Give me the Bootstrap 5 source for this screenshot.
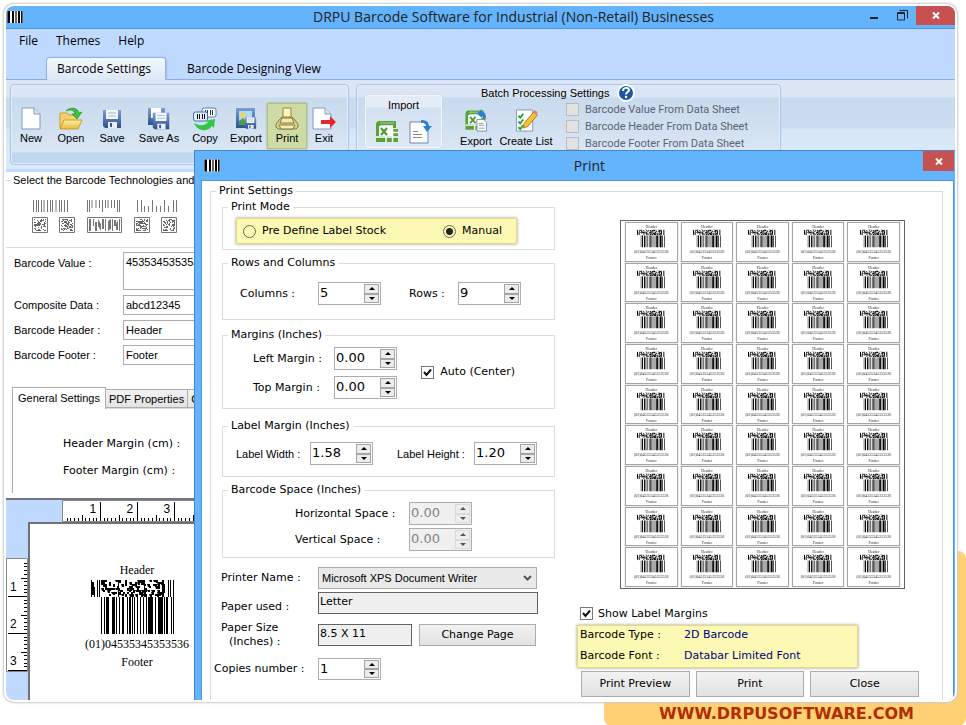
<!DOCTYPE html>
<html lang="en">
<head>
<meta charset="utf-8">
<meta name="viewport" content="width=device-width, initial-scale=1">
<title>DRPU Barcode Software for Industrial (Non-Retail) Businesses</title>
<link href="https://cdn.jsdelivr.net/npm/bootstrap@5.3.0/dist/css/bootstrap.min.css" rel="stylesheet">
<style>
:root{--sky:#64b3fd;--pale:#c0daff;--edge:#4f96da;--ui:"Open Sans","Noto Sans",sans-serif;--sans:"Liberation Sans",Arial,sans-serif;--wide:"DejaVu Sans",Verdana,sans-serif;--serif:"Liberation Serif","Times New Roman",serif}
body{font-family:var(--sans);font-size:11px;line-height:14px;color:#000;background:#fff}
button,input,select,textarea{font:inherit;color:inherit;border-radius:0;margin:0}
label{margin:0}
.shell{position:relative;padding:6px 11px 0 6px;isolation:isolate}
.plate{position:absolute;right:0;bottom:0;width:362px;height:175px;background:#ffd174;border-radius:8px;z-index:-1}
.window-stack{display:grid;grid-template-columns:minmax(0,1fr);border-radius:8px;overflow:hidden;background:#fff}
.ring{border-radius:8px;box-shadow:0 0 0 2px #fff,0 0 2px 3px #c9c9c9}
.window-stack>*{grid-area:1/1}
.base{display:flex;flex-direction:column;min-width:0}
.titlebar{background:var(--sky);color:#222;font:14px/22px var(--ui)}
.base>.titlebar{height:23px;border-bottom:1px solid var(--edge)}
.base>.titlebar .caption{padding-left:144px}
.closer{border:0;background:#c75050;color:#fff;padding:0;display:flex;align-items:center;justify-content:center}
.base .closer{width:39px;height:19px}
.dialog .closer{width:31px;height:20px;margin-right:1px}
.wbtn{border:0;background:none;padding:0;width:28px;height:19px;display:flex;align-items:center;justify-content:center}
.menus{background:var(--pale);font:12px/24px var(--ui);height:28px;padding-left:13px;gap:18px}
.menus a{color:#000;text-decoration:none}
.tabrow{background:var(--pale);height:23px;padding-left:40px;border-bottom:1px solid #84aede;font:12px/22px var(--ui)}
.tabrow button{border:0;background:none;padding:0 10px;height:23px;margin-left:11px}
.tabrow button.on{background:linear-gradient(#f3f8fe,#dce7f5);border:1px solid #8fb5e6;border-bottom:0;border-radius:4px 4px 0 0;box-shadow:1px 0 2px #a2b9ef;margin-left:0;padding:0 4px 0 0;width:120px}
.ribbon{background:linear-gradient(#dbe5f3 17px,#c8daed 18px,#cbdcee 48px,#d5e6f5 49px,#dcebfb);height:92px;padding:4px 4px 4px 4px;gap:7px;border-bottom:3px solid var(--pale)}
.rgroup{border:1px solid #a9c6ee;border-radius:4px;background:linear-gradient(#dbe5f3 12px,#c8daed 13px,#d9e6f4 67px,#c0d7f0 68px);box-shadow:inset 0 0 0 1px #e2edf9}
.tools{width:339px;padding:18px 0 0 0}
.tool{border:1px solid transparent;background:none;padding:3px 0 0;height:46px;display:flex;flex-direction:column;align-items:center}
.tool svg{display:block;width:24px;height:24px}
.tool.sel{background:#cedba4;border-color:#b3bf8a;box-shadow:0 0 2px #99a36b}
.w-a{width:40px}.w-b{width:42px}.w-c{width:52px}.w-d{width:34px}
.batch{width:425px;padding:0 8px}
.batch .tool{padding-top:7px;height:48px;gap:2px;margin-left:-2px}
.importbox{width:77px;height:53px;margin-top:10px;border:1px solid #f2f7fd;border-radius:3px;background:linear-gradient(#e4ecf8 11px,#d3e0f0 12px,#dfe9f6);box-shadow:0 0 1px #9db6d6;padding-top:2px}
.importbox svg{width:24px;height:24px}
.batchtitle{height:16px;margin-left:23px}
.batch .listtool{width:64px}
.icon-btn{border:0;background:none;padding:0;display:block;height:24px}
.rcheck{gap:6px;color:#5c6470;font-family:Roboto,sans-serif;height:17px;white-space:nowrap}
.tick{appearance:none;width:13px;height:13px;border:1px solid #777;background:#fff center/11px 11px no-repeat;flex:none}
.tick:checked{background-image:url("data:image/svg+xml,%3Csvg xmlns='http://www.w3.org/2000/svg' viewBox='0 0 11 11'%3E%3Cpath d='M2 5l2.5 3L9 2.500' fill='none' stroke='%23111' stroke-width='2'/%3E%3C/svg%3E")}
.tick:disabled{border-color:#bcbcbc;background-color:#e2e2e2}
/* left-hand settings panel */
.panel{width:260px}
.frame{border:1px solid #dcdcdc;min-width:0;margin:0;padding:var(--pt,0) var(--pr,0) 0 var(--pl,0px)}
.frame>legend{float:none;width:auto;font-size:11px;line-height:14px;margin:0 0 0 calc(5px - var(--pl,0px));padding:0 3px;white-space:nowrap}
.techs{border-width:1px 0;height:75px;margin-top:1px}
.techs>legend{margin-left:4px}
.techs>svg{margin:13px 0 0 26px}
.fields{display:grid;grid-template-columns:109px 1fr;row-gap:5px;padding:4px 0 0 8px;align-items:center}
.fields input,.fields textarea{border:1px solid #abadb3;height:20px;padding:0 2px;display:block;width:100%;resize:none;overflow:hidden}
.fields textarea{height:38px;padding-top:2px}
.sheets{margin-left:6px;margin-top:22px}
.sheets button{border:1px solid #acacac;background:linear-gradient(#f2f2f2,#e3e3e3);height:19px;padding:0 3px;margin-left:-1px;white-space:nowrap}
.sheets .on{background:#fff;border-bottom:0;height:22px;padding:0 5px 2px;margin:0 0 -1px}
.sheetbody{margin-left:6px;border-left:1px solid #acacac;border-top:1px solid #dcdcdc;height:85px;padding:28px 0 0 50px;font-family:var(--wide);display:grid;row-gap:13px;align-content:start}
.canvas{border-top:2px solid #707580;background:var(--pale);display:grid;grid-template:22px 1fr/22px 1fr;flex:1;width:260px;margin-top:5px}
.canvas .top{padding-left:56px;grid-column:1/3}
.canvas svg{display:block}
.paper{border:2px solid #707070;border-width:2px 0 0 2px;background:#fff;font:12px/14px var(--serif);padding:39px 0 0 54px}
.artwork{width:106px;text-align:center}
.artwork svg{margin:3px 0 3px 7px}
.ruler text{font:12px var(--sans)}
/* print window */
.dialog{margin:144px 0 0 188px;background:var(--sky);border:1px solid #4887c4;border-width:1px 0 0 1px;display:flex;flex-direction:column;font-family:var(--wide)}
.dialog .titlebar{height:29px;line-height:30px;padding-left:9px}
.dialog .caption{padding-left:36px}
.dialog>.body{margin:0 1px 0 6px;border:1px solid var(--edge);border-bottom:0;background:#fff;padding:3px 10px 0 8px;flex:1}
.outer{border-bottom:0;height:100%;--pt:2px;--pl:11px}
.leftcol{width:333px}
.yellow{background:#fbf9b4;border:1px solid #e3dc84;box-shadow:0 0 3px #999}
.modes{width:281px;height:26px;padding:0 14px 0 6px}
.modes label{gap:6px}
.dot{appearance:none;width:13px;height:13px;border:1px solid #6b6a4d;border-radius:50%;background:transparent;flex:none}
.dot:checked{background:radial-gradient(circle,#222 0 3px,transparent 4px)}
.spin{display:flex;width:63px;height:23px;border:1px solid #abadb3;background:#fff;flex:none}
.spin input{appearance:textfield;border:0;background:none;min-width:0;flex:1;padding:0 1px;font-size:13px;line-height:19px;height:19px;outline:0}
.spin input::-webkit-inner-spin-button{appearance:none}
.spin span{display:flex;flex-direction:column;width:15px;margin:1px 1px 1px 0}
.spin button{flex:1;padding:0;border:1px solid #a5a5a5;background:#ececec;display:flex;align-items:center;justify-content:center}
.spin button::before{content:"";border:3px solid transparent;border-bottom-color:#000;border-top:0}
.spin button+button::before{border-top:3px solid #000;border-bottom:0}
.spin.off{background:#f0f0f0;color:#838383}
.spin.off button{border-color:#d0d0d0;opacity:.65}
.g-mode{height:50px;--pt:4px;--pr:0px;--pl:13px}
.g-rc{height:64px;margin-top:6px;--pt:12px;--pr:33px;--pl:17px}
.g-rc label{width:78px}
.g-rc .second{width:49px}
.g-mar{height:81px;margin-top:8px;--pt:5px;--pr:39px;--pl:30px}
.g-mar .auto{gap:6px;padding-bottom:2px}
.g-lab{height:58px;margin-top:10px;--pt:9px;--pr:17px;--pl:13px;font-family:var(--sans)}
.g-lab legend,.g-lab .spin{font-family:var(--wide)}
.g-lab .first{width:74px}
.g-spc{height:75px;margin-top:6px;--pt:5px;--pr:0px;--pl:72px}
.pairs{display:grid;align-items:center}
.g-mar .pairs{grid-template-columns:81px 63px;row-gap:6px}
.g-spc .pairs{grid-template-columns:114px 63px;row-gap:3px}
.setup{margin:9px 0 0 -8px;display:grid;grid-template-columns:104px minmax(0,1fr);row-gap:3px;align-items:center}
.setup label{padding-left:7px}
.setup select{width:219px;height:22px;border:1px solid #acacac;background:#e9e9e9 url("data:image/svg+xml,%3Csvg xmlns='http://www.w3.org/2000/svg' viewBox='0 0 9 6'%3E%3Cpath d='M1 1l3.500 3.500L8 1' fill='none' stroke='%23555' stroke-width='2'/%3E%3C/svg%3E") right 4px center/9px 6px no-repeat;appearance:none;padding:0 3px;font-family:var(--sans)}
.ro{border:1px solid #646464;background:#f0f0f0;height:22px;padding:0 1px 3px}
.ro-long{width:220px}.ro-short{width:94px}
.pbtn{border:1px solid #acacac;background:linear-gradient(#f2f2f2,#e2e2e2);height:22px;padding:0}
.change{width:117px;margin-left:7px}
.setup .copies{margin-top:6px}
.copies.spin{height:22px}
.rightcol{padding:20px 23px 3px 25px}
.sheet{width:285px;aspect-ratio:17/22;border:1px solid #646464;margin-left:40px;padding:1px 4px;display:grid;grid-template-columns:repeat(5,1fr);grid-auto-rows:1fr;column-gap:3px;row-gap:1px}
.cell{border:1px solid #a5a5a5;box-shadow:0 0 1px #bbb;font:4px/5px var(--serif);text-align:center;min-height:0;overflow:hidden;padding-top:1px;color:#222}
.cell svg{display:block;width:28px;height:19px;margin:0 auto 1px}
.cell .foot{margin-top:1px}
.show{margin-top:18px;gap:5px}
.facts{width:281px;margin:4px 0 3px -3px;padding:0 2px;display:grid;grid-template-columns:104px 1fr;grid-auto-rows:21px;line-height:17px;height:43px}
.facts dd{margin:0;color:#000080}.facts dt{font-weight:400}
.actions{gap:6px;margin-left:1px}
.actions .pbtn{height:26px;flex:1}
.site{height:26px;font:bold 16px/27px var(--wide);text-align:right;padding-right:41px}
.site a{color:#b02e04;text-decoration:none}
</style>
<script src="https://cdn.jsdelivr.net/npm/bootstrap@5.3.0/dist/js/bootstrap.bundle.min.js"></script>
</head>
<body>
<svg width="0" height="0" class="position-absolute" aria-hidden="true">
<defs>
<linearGradient id="blue" x2="0" y2="1"><stop stop-color="#7d9fd4"/><stop offset="1" stop-color="#2f4f8e"/></linearGradient>
<linearGradient id="gold" x2="0" y2="1"><stop stop-color="#fff0a0"/><stop offset="1" stop-color="#e8b93c"/></linearGradient>
<symbol id="strips" viewBox="0 0 16 12"><path fill="#fff" d="M0 0h16v12H0z"/><path d="M1 0h2v12H1zM5 0h2v12H5zM11 0h2v12h-2zM14 0h1v12h-1z"/><path fill="#666" d="M8 0h2v12H8zM0 0h1v12H0zM15 0h1v12h-1z"/></symbol>
<symbol id="page" viewBox="0 0 24 24"><path d="M3 1h12l6 6v15H3z" fill="#fff" stroke="#8698b5"/><path d="M15 1v6h6" fill="#dce5f2" stroke="#8698b5"/></symbol>
<symbol id="floppy" viewBox="0 0 24 24"><path d="M3 3h18v18H5l-2-2z" fill="url(#blue)"/><path d="M6 3h12v9H6z" fill="#f4f7fc"/><path d="M8 6h8M8 9h8" stroke="#a8b6d0"/><path d="M8 15h9v6H8z" fill="#e9edf4"/><path d="M10 16h2v4h-2z" fill="#34548f"/></symbol>
<symbol id="excel" viewBox="0 0 24 24"><path d="M1 22V5c0-2 1-4 3-4h17v7h-3V5H6l-2 2v9h14V9h5v13z" fill="#58a23b"/><path d="M4 6h14v10H4z" fill="#f6fbf4"/><path d="M5 3h14" stroke="#a9d08d"/><path d="M6 8l6 7M12 8l-6 7" stroke="#4e9736" stroke-width="2"/><path d="M17 12.500h7M1 17h22M11 16v6M17.500 8v14" stroke="#fff" stroke-width="1.500"/></symbol>
<symbol id="matrix2d" viewBox="0 0 83 17"><path id="matrixPath"/></symbol>
<symbol id="bars" viewBox="0 0 73 37"><path d="M0 0h1v37H0zM3 0h1v37H3zM5 0h3v37H5zM11 0h3v37h-3zM15 0h1v37h-1zM18 0h1v37h-1zM21 0h2v37h-2zM26 0h1v37h-1zM28 0h2v37h-2zM31 0h1v37h-1zM33 0h1v37h-1zM36 0h1v37h-1zM39 0h1v37h-1zM42 0h1v37h-1zM45 0h1v37h-1zM47 0h5v37h-5zM54 0h1v37h-1zM57 0h5v37h-5zM63 0h1v37h-1zM65 0h2v37h-2zM70 0h1v37h-1zM72 0h1v37h-1z"/></symbol>
<symbol id="composite" viewBox="0 0 83 54"><use href="#matrix2d" width="83" height="17"/><use href="#bars" x="10" y="17" width="73" height="37"/></symbol>
</defs>
</svg>

<div class="shell">
<div class="plate"></div>
<div class="ring"><div class="window-stack">
<section class="base">
  <header class="titlebar d-flex">
    <svg class="mt-1" width="17" height="14"><use href="#strips" x="1" y="1" width="16" height="12"/></svg>
    <div class="caption flex-grow-1 text-center text-nowrap">DRPU Barcode Software for Industrial (Non-Retail) Businesses</div>
    <button class="wbtn" aria-label="Minimize"><svg width="8" height="8"><path d="M0 5h8v2H0z" fill="#222"/></svg></button>
    <button class="wbtn" aria-label="Restore"><svg width="11" height="11" fill="none" stroke="#222"><path d="M2.500.5h8v8M.5 2.500h7v7.500h-7zM.5 3.500h7"/></svg></button>
    <button class="closer" aria-label="Close"><svg width="8" height="7"><path d="M1 .5l6 6M7 .5l-6 6" stroke="#fff" stroke-width="2"/></svg></button>
  </header>
  <nav class="menus d-flex"><a href="#">File</a><a href="#">Themes</a><a href="#">Help</a></nav>
  <div class="tabrow d-flex"><button class="on">Barcode Settings</button><button>Barcode Designing View</button></div>
  <div class="ribbon d-flex">
    <div class="rgroup tools d-flex align-items-start">
      <button class="tool w-a"><svg><use href="#page"/></svg>New</button>
      <button class="tool w-a"><svg viewBox="0 0 24 24"><path d="M1 21V6h7l2 2h8v4" fill="#f4d270" stroke="#cf9b2c"/><path d="M1 22l4-9h18l-4 9z" fill="url(#gold)" stroke="#cf9b2c"/><path d="M7 4c5-5 12-3 13 2l3-1-5 7-5-5 3-.5C15 3 11 2 7 4z" fill="#3bc23a" stroke="#258c2b" stroke-width=".6"/></svg>Open</button>
      <button class="tool w-b"><svg><use href="#floppy"/></svg>Save</button>
      <button class="tool w-c"><svg viewBox="0 0 24 24"><path d="M1 1h17v17H1z" fill="url(#blue)"/><path d="M4 1h10v10H4z" fill="#fff"/><use href="#floppy" x="3" y="3" width="22" height="22"/></svg>Save As</button>
      <button class="tool w-a"><svg viewBox="0 0 24 24"><rect x="9" y="1" width="14" height="9" rx="2" fill="#fff" stroke="#4f80c5"/><path d="M12.500 3v5M14.500 3v5M17.500 3v5M19.500 3v5" stroke="#333"/><rect x=".5" y="5" width="14" height="9" rx="2" fill="#e5effc" stroke="#3f70b8"/><path d="M4.500 7v5M6.500 7v5M9.500 7v5M11.500 7v5" stroke="#111"/><path d="M1 16c5 3 11 3 14-1l-3-1 10-2-1 9-2-2c-5 7-15 5-18-3z" fill="#35c54b"/></svg>Copy</button>
      <button class="tool w-b"><svg viewBox="0 0 24 24"><path d="M2 1h19v20H2z" fill="url(#blue)"/><path d="M5 4h13v14H5z" fill="#a9dcfa"/><circle cx="9" cy="8" r="2.500" fill="#ffd23c"/><path d="M5 18v-4l4-3 4 5 3-3 2 3v2z" fill="#4a9f43"/><use href="#floppy" x="9" y="8" width="15" height="16"/></svg>Export</button>
      <button class="tool sel w-a"><svg viewBox="0 0 24 24"><path d="M8 1h8v11H8z" fill="#fff6b4" stroke="#8d8756"/><path d="M4 13l3-3h10l3 3 3 4v3l-2 2H3l-2-2v-3z" fill="#d9ce83" stroke="#837c4d"/><path d="M7 11h10l2 5H5z" fill="#f3eaa9" stroke="#837c4d"/><path d="M4 18h16l-2 4H6z" fill="#f6edb3" stroke="#837c4d"/></svg>Print</button>
      <button class="tool w-d"><svg viewBox="0 0 24 24"><use href="#page" x="-2" width="24" height="24"/><path d="M9 13h9V9l6 6-6 6v-4H9z" fill="#e3282b"/></svg>Exit</button>
    </div>
    <div class="rgroup batch d-flex">
      <div class="importbox text-center"><div>Import</div>
        <div class="d-flex justify-content-evenly mt-2"><button class="icon-btn" aria-label="Import from Excel"><svg><use href="#excel"/></svg></button><button class="icon-btn" aria-label="Import from file"><svg viewBox="0 0 24 24"><path d="M2 2h13l5 4v17H2z" fill="#fff" stroke="#7284b8"/><path d="M5 11.500h5M5 14.500h9M5 17.500h9" stroke="#888"/><path d="M13 0c5 0 8 2 8 6h3l-5 6-4-6h3c0-3-2-4-5-3z" fill="#2880d2"/></svg></button></div>
      </div>
      <div class="flex-grow-1 ms-3">
        <div class="batchtitle d-flex align-items-center">Batch Processing Settings
          <svg class="ms-2" width="18" height="18"><circle cx="9" cy="9" r="8" fill="#1e57a5" stroke="#fff" stroke-width="2"/><path d="M6 7c0-4 6-4 6-1 0 2-3 2-3 4.500" fill="none" stroke="#fff" stroke-width="2"/><circle cx="9" cy="13" r="1.200" fill="#fff"/></svg></div>
        <div class="d-flex">
          <button class="tool w-a"><svg viewBox="0 0 24 24"><use href="#excel" width="23" height="24"/><path d="M13 11h7l3 3v9H13z" fill="#fff" stroke="#7891b4"/><path d="M15 15h5M15 17h6M15 20h6" stroke="#999"/><path d="M22 10c1-5-1-7-4-7V0l-5 5 5 4V6c1 0 2 1 1 4z" fill="#2880d2"/></svg>Export</button>
          <button class="tool listtool"><svg viewBox="0 0 24 24"><path d="M2 1h17v22H2z" fill="#fff" stroke="#8794ba"/><path d="M4 7l2 2 3-4M4 13l2 2 3-4M4 19l2 2 3-4" fill="none" stroke="#26a436" stroke-width="2"/><path d="M9 20l1-5L20 3l4 3-10 12z" fill="#f7c433" stroke="#a87b22"/><path d="M19 4l2-3 3 2-1 3z" fill="#e28278"/></svg><span class="text-nowrap">Create List</span></button>
          <div class="ms-1 ps-1">
            <label class="rcheck d-flex align-items-center"><input class="tick" type="checkbox" disabled>Barcode Value From Data Sheet</label>
            <label class="rcheck d-flex align-items-center"><input class="tick" type="checkbox" disabled>Barcode Header From Data Sheet</label>
            <label class="rcheck d-flex align-items-center"><input class="tick" type="checkbox" disabled>Barcode Footer From Data Sheet</label>
          </div>
        </div>
      </div>
    </div>
  </div>

  <div class="panel">
    <fieldset class="frame techs"><legend>Select the Barcode Technologies and Font</legend>
      <svg width="180" height="36">
        <path stroke="#777" d="M1.500 0v12M4.500 0v12M6.500 0v12M9.500 0v12M12 0v12M15.500 0v12M18.500 0v12M20.500 0v12M24 0v12M27.500 0v12M29.500 0v12M32.500 0v12M35.500 0v12M55.500 0v12M57.500 0v12M60 0v8M64 0v8M67.500 0v8M70.500 0v12M73.500 0v8M76 0v8M79.500 0v8M82.500 0v8M85.500 0v12M87.500 0v12M105.500 0v12M109.500 0v12M112.500 6v6M116.500 6v6M120.500 0v12M124.500 6v6M128.500 6v6M132.500 0v12M136.500 6v6M141.500 0v12M144.500 0v12"/>
        <g fill="none" stroke="#777"><path d="M.5 17.500h15v15H.5zM27.500 17.500h15v15h-15zM55.500 17.500h34v15h-34zM102.500 17.500h15v15h-15zM129.500 17.500h15v15h-15z"/></g>
        <path id="miniCodes" fill="#666"/>
        <path fill="#777" d="M57 19h2v12h-2zM61 19h1v7h-1zM63 22h2v9h-2zM66 19l3 5v7l-3-5zM70 19h2v10h-2zM73 19h1v12h-1zM76 21l3-2v10l-3 2zM80 19h1v12h-1zM82 20h2v6h-2zM84 24l2-4v10h-2zM87 19h1v12h-1z"/>
      </svg>
    </fieldset>
    <div class="fields">
      <label class="align-self-start pt-1" for="bv">Barcode Value :</label><textarea id="bv">45353453535353536</textarea>
      <label for="cd">Composite Data :</label><input id="cd" value="abcd12345">
      <label for="bh">Barcode Header :</label><input id="bh" value="Header">
      <label for="bf">Barcode Footer :</label><input id="bf" value="Footer">
    </div>
    <div class="sheets d-flex align-items-end"><button class="on">General Settings</button><button>PDF Properties</button><button>Color Settings</button></div>
    <div class="sheetbody"><div>Header Margin (cm) :</div><div>Footer Margin (cm) :</div></div>
  </div>
  <div class="canvas">
    <div class="top"><svg class="ruler" id="rulerX" width="200" height="22"></svg></div>
    <div><svg class="ruler" id="rulerY" width="22" height="150"></svg></div>
    <div class="paper"><div class="artwork"><div>Header</div><svg width="83" height="54"><use href="#composite"/></svg><div class="text-nowrap">(01)04535345353536</div><div class="mt-1">Footer</div></div></div>
  </div>
</section>

<section class="dialog">
  <header class="titlebar d-flex">
    <svg class="mt-2" width="16" height="13"><use href="#strips" width="16" height="13"/></svg>
    <div class="caption flex-grow-1 text-center">Print</div>
    <button class="closer" aria-label="Close print window"><svg width="8" height="7"><path d="M1 .5l6 6M7 .5l-6 6" stroke="#fff" stroke-width="2"/></svg></button>
  </header>
  <div class="body">
  <fieldset class="frame outer"><legend>Print Settings</legend>
    <div class="d-flex">
    <div class="leftcol flex-shrink-0">
      <fieldset class="frame g-mode"><legend>Print Mode</legend>
        <div class="yellow modes d-flex align-items-center justify-content-between">
          <label class="d-flex align-items-center"><input class="dot" type="radio" name="mode">Pre Define Label Stock</label>
          <label class="d-flex align-items-center"><input class="dot" type="radio" name="mode" checked>Manual</label>
        </div>
      </fieldset>
      <fieldset class="frame g-rc"><legend>Rows and Columns</legend>
        <div class="d-flex align-items-center">
          <label for="nc">Columns :</label><div class="spin"><input id="nc" type="number" value="5"><span><button aria-label="More columns"></button><button aria-label="Fewer columns"></button></span></div>
          <label class="second ms-auto" for="nr">Rows :</label><div class="spin"><input id="nr" type="number" value="9"><span><button aria-label="More rows"></button><button aria-label="Fewer rows"></button></span></div>
        </div>
      </fieldset>
      <fieldset class="frame g-mar"><legend>Margins (Inches)</legend>
        <div class="d-flex align-items-center justify-content-between">
          <div class="pairs">
            <label for="lm">Left Margin :</label><div class="spin"><input id="lm" type="text" value="0.00"><span><button aria-label="Increase left margin"></button><button aria-label="Decrease left margin"></button></span></div>
            <label for="tm">Top Margin :</label><div class="spin"><input id="tm" type="text" value="0.00"><span><button aria-label="Increase top margin"></button><button aria-label="Decrease top margin"></button></span></div>
          </div>
          <label class="auto d-flex align-items-center text-nowrap"><input class="tick" type="checkbox" checked>Auto (Center)</label>
        </div>
      </fieldset>
      <fieldset class="frame g-lab"><legend>Label Margin (Inches)</legend>
        <div class="d-flex align-items-center">
          <label class="first" for="lw">Label Width :</label><div class="spin"><input id="lw" type="text" value="1.58"><span><button aria-label="Increase width"></button><button aria-label="Decrease width"></button></span></div>
          <label class="ms-4" for="lh">Label Height :</label><div class="spin ms-auto"><input id="lh" type="text" value="1.20"><span><button aria-label="Increase height"></button><button aria-label="Decrease height"></button></span></div>
        </div>
      </fieldset>
      <fieldset class="frame g-spc"><legend>Barcode Space (Inches)</legend>
        <div class="pairs">
          <label for="hs">Horizontal Space :</label><div class="spin off"><input id="hs" type="text" value="0.00" disabled><span><button disabled aria-label="Increase horizontal space"></button><button disabled aria-label="Decrease horizontal space"></button></span></div>
          <label for="vs">Vertical Space :</label><div class="spin off"><input id="vs" type="text" value="0.00" disabled><span><button disabled aria-label="Increase vertical space"></button><button disabled aria-label="Decrease vertical space"></button></span></div>
        </div>
      </fieldset>
      <div class="setup">
        <label for="pn">Printer Name :</label><select id="pn"><option>Microsoft XPS Document Writer</option></select>
        <label class="pt-2" for="pu">Paper used :</label><input class="ro ro-long" id="pu" value="Letter" readonly>
        <label class="mt-1" for="ps">Paper Size<br><span class="ms-1 ps-1">(Inches) :</span></label><div class="d-flex align-items-center mt-1"><input class="ro ro-short" id="ps" value="8.5 X 11" readonly><button class="pbtn change">Change Page</button></div>
        <label class="ps-0 copies" for="cn">Copies number :</label><div class="spin copies"><input id="cn" type="number" value="1"><span><button aria-label="More copies"></button><button aria-label="Fewer copies"></button></span></div>
      </div>
    </div>
    <div class="rightcol flex-grow-1">
      <div class="sheet" id="sheet"></div>
      <label class="show d-flex align-items-center"><input class="tick" type="checkbox" checked>Show Label Margins</label>
      <dl class="facts yellow"><dt>Barcode Type :</dt><dd>2D Barcode</dd><dt>Barcode Font :</dt><dd>Databar Limited Font</dd></dl>
      <div class="actions d-flex"><button class="pbtn">Print Preview</button><button class="pbtn">Print</button><button class="pbtn">Close</button></div>
    </div>
    </div>
  </fieldset>
  </div>
</section>
</div></div>
<footer class="site"><a href="#">WWW.DRPUSOFTWARE.COM</a></footer>
</div>

<template id="labelCell"><div class="cell"><div>Header</div><svg><use href="#composite"/></svg><div>(01)04535345353536</div><div class="foot">Footer</div></div></template>
<script>
// Deterministic generator for the 2D symbol modules
let seed = 7;
const rnd = () => (seed = (seed * 16807) % 2147483647) / 2147483647;
let d = 'M0 0h1v17H0zM6 0h1v17H6zM8 0h1v17H8zM1 2h2v13H1zM3 7h1v10H3zM27 0h1v17h-1zM53 0h1v17h-1zM77 0h1v17h-1zM79 0h1v17h-1zM82 0h1v17h-1zM71 0h2v17h-2zM73 4h1v9h-1z';
for (let y = 0; y < 16; y += 2)
  for (let x = 10; x < 71; x += 2)
    if (rnd() < .46) d += `M${x} ${y}h${rnd() < .4 ? 3 : 2}v${rnd() < .5 ? 3 : 2}h-2z`;
document.getElementById('matrixPath').setAttribute('d', d);

let m = '';
for (const [x0, w] of [[2, 12], [29, 12], [104, 12], [131, 12]])
  for (let y = 19; y < 31; y++)
    for (let x = x0; x < x0 + w; x++) if (rnd() < .5) m += `M${x} ${y}h1v1h-1z`;
document.getElementById('miniCodes').setAttribute('d', m);

// Rulers: 37px per unit, ten ticks in each
let rx = '<path fill="#fff" stroke="#888" d="M.5.5h200v21H.5z"/>', ry = '<path fill="#fff" stroke="#888" d="M.5 36.500h21v113H.5z"/>';
for (let i = 1; i < 50; i++) {
  const p = Math.round(i * 3.7) + 1.5, big = i % 10 === 0, mid = i % 5 === 0;
  rx += `<path stroke="#000" d="M${p} 21v-${big ? 19 : mid ? 6 : 3}"/>`;
  if (i < 31) ry += `<path stroke="#000" d="M21 ${p + 36}h-${big ? 19 : mid ? 6 : 3}"/>`;
  if (big && i < 40) {
    rx += `<text x="${p - 11}" y="13">${i / 10}</text>`;
    if (i < 31) ry += `<text x="4" y="${p + 30}">${i / 10}</text>`;
  }
}
document.getElementById('rulerX').innerHTML = rx;
document.getElementById('rulerY').innerHTML = ry;

const sheet = document.getElementById('sheet'), tpl = document.getElementById('labelCell');
for (let i = 0; i < 45; i++) sheet.append(tpl.content.cloneNode(true));
</script>
</body>
</html>
